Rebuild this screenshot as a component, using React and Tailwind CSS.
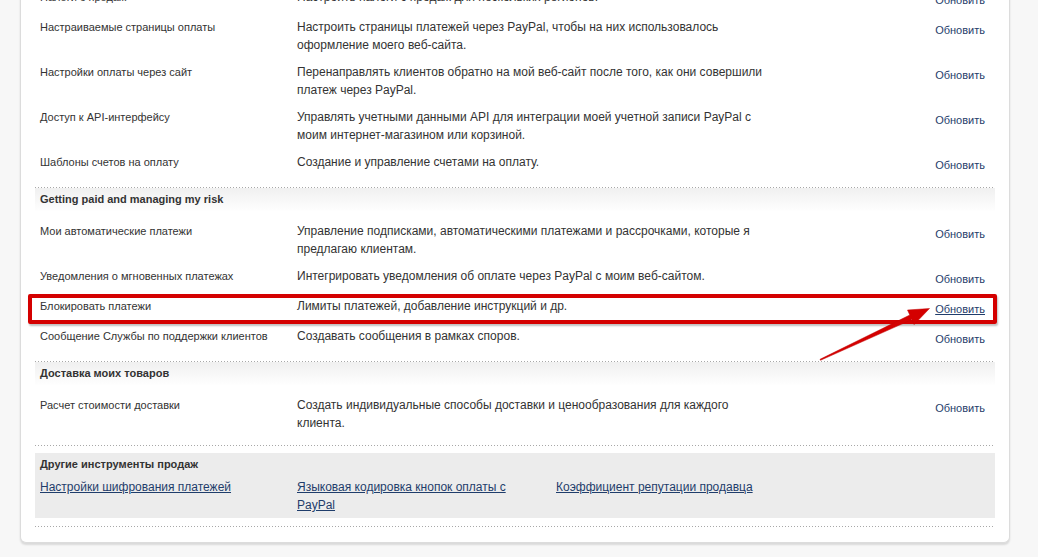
import React from 'react';

const sections = [
  {
    title: null,
    rows: [
      { name: 'Налоги с продаж', desc: 'Настроить налоги с продаж для нескольких регионов.', h: 'h-[30px]' },
      { name: 'Настраиваемые страницы оплаты', desc: 'Настроить страницы платежей через PayPal, чтобы на них использовалось оформление моего веб-сайта.', h: 'h-[45px]' },
      { name: 'Настройки оплаты через сайт', desc: 'Перенаправлять клиентов обратно на мой веб-сайт после того, как они совершили платеж через PayPal.', h: 'h-[45px]' },
      { name: 'Доступ к API-интерфейсу', desc: 'Управлять учетными данными API для интеграции моей учетной записи PayPal с моим интернет-магазином или корзиной.', h: 'h-[45px]' },
      { name: 'Шаблоны счетов на оплату', desc: 'Создание и управление счетами на оплату.', h: 'h-[30px]' },
    ],
  },
  {
    title: 'Getting paid and managing my risk',
    rows: [
      { name: 'Мои автоматические платежи', desc: 'Управление подписками, автоматическими платежами и рассрочками, которые я предлагаю клиентам.', h: 'h-[45px]' },
      { name: 'Уведомления о мгновенных платежах', desc: 'Интегрировать уведомления об оплате через PayPal с моим веб-сайтом.', h: 'h-[30px]' },
      { name: 'Блокировать платежи', desc: 'Лимиты платежей, добавление инструкций и др.', h: 'h-[30px]', active: true },
      { name: 'Сообщение Службы по поддержки клиентов', desc: 'Создавать сообщения в рамках споров.', h: 'h-[30px]' },
    ],
  },
  {
    title: 'Доставка моих товаров',
    rows: [
      { name: 'Расчет стоимости доставки', desc: 'Создать индивидуальные способы доставки и ценообразования для каждого клиента.', h: 'h-[45px]' },
    ],
  },
];

const Dotted = () => (
  <div className="h-px bg-[linear-gradient(to_right,#a8a8a8_1px,transparent_1px)] bg-[length:3px_1px]" />
);

const Row = ({ row }) => (
  <div className={`flex ${row.h}`}>
    <div className="w-[262px] pl-[5px] text-[11px] leading-[18px] text-[#333]">{row.name}</div>
    <div className="w-[478px] text-[12px] leading-[18px] text-[#333]">{row.desc}</div>
    <div className="flex-1 flex justify-end pr-[10px] pt-[3px]">
      <a className={`text-[11px] leading-[18px] text-[#1f3d6b] ${row.active ? 'underline' : ''}`}>Обновить</a>
    </div>
  </div>
);

export default function App() {
  return (
    <div className="relative h-[557px] overflow-hidden bg-[#f7f7f7] font-['Liberation_Sans',Arial,sans-serif]">
      <div className="ml-[20px] w-[990px] bg-white border border-t-0 border-[#dcdcdc] rounded-b-[6px] shadow-[0_2px_2px_rgba(0,0,0,0.12)] px-[14px] pb-[15px]">
        <div className="-mt-[12px]">
          {sections.map((s, i) => (
            <div key={i}>
              {s.title && (
                <div className="h-[34px]">
                  <div className="h-[24px] pt-[2px] pl-[5px] bg-gradient-to-b from-[#f0f0f0] to-white text-[11px] leading-[18px] font-bold text-[#333]">
                    {s.title}
                  </div>
                </div>
              )}
              {s.rows.map((r) => (
                <Row key={r.name} row={r} />
              ))}
              <div className="h-[4px]" />
              <Dotted />
            </div>
          ))}
        </div>

        <div className="mt-[7px] bg-[#ececec] pt-[2px] pb-[4px] pl-[5px]">
          <div className="text-[11px] leading-[18px] font-bold text-[#333]">Другие инструменты продаж</div>
          <div className="flex mt-[5px] text-[12px] leading-[18px]">
            <div className="w-[257px]">
              <a className="text-[#1f3d6b] underline">Настройки шифрования платежей</a>
            </div>
            <div className="w-[259px] pr-[20px]">
              <a className="text-[#1f3d6b] underline">Языковая кодировка кнопок оплаты с PayPal</a>
            </div>
            <div>
              <a className="text-[#1f3d6b] underline">Коэффициент репутации продавца</a>
            </div>
          </div>
        </div>
        <div className="mt-[8px]">
          <Dotted />
        </div>
      </div>

      {/* highlight annotation */}
      <div className="absolute left-[28px] top-[294px] w-[969px] h-[30px] border-4 border-[#d40000] rounded-[2px] shadow-[1px_2px_2px_rgba(0,0,0,0.25)] pointer-events-none" />
      <svg className="absolute left-0 top-0 pointer-events-none" width="1038" height="557">
        <polygon
          points="820,359.3 909.8,315 907.5,310 929.5,308.5 914.1,324.6 911.8,319.6 820.5,360.3"
          fill="#d40000"
          stroke="#c00000"
          strokeWidth="0.5"
          strokeLinejoin="round"
        />
      </svg>
    </div>
  );
}
